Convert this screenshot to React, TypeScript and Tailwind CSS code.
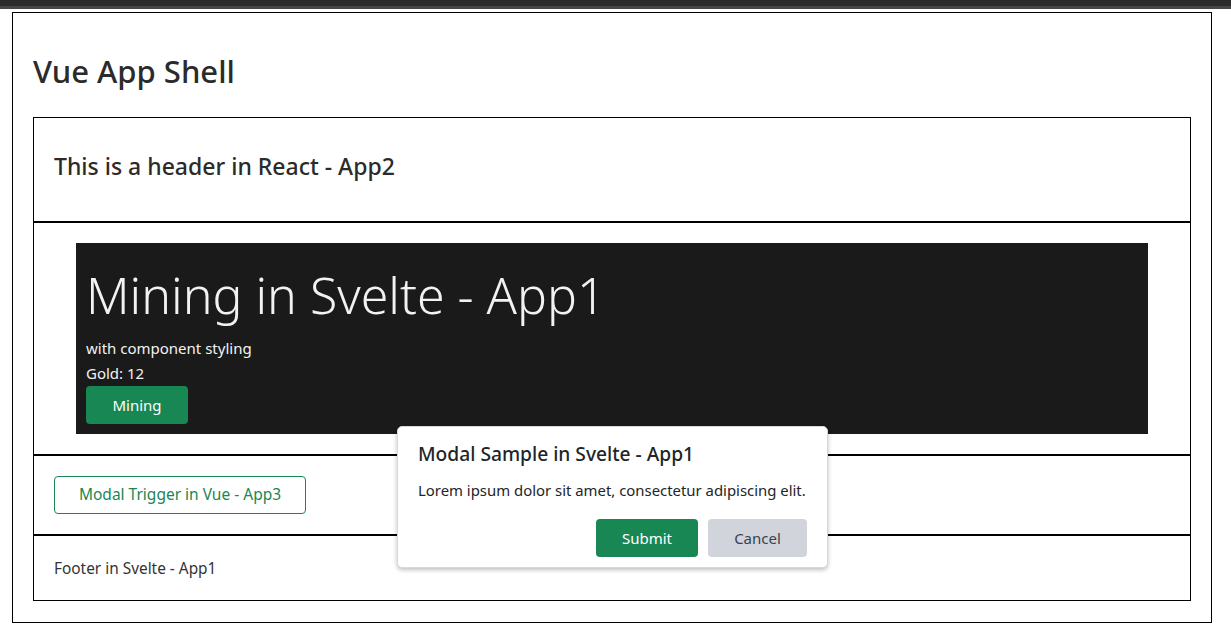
import React from 'react';

const font = { fontFamily: '"Noto Sans", "Open Sans", sans-serif' };

// Svelte modal overlay
const ModalSample: React.FC = () => (
  <div className="absolute left-[397px] top-[426px] w-[431px] h-[142px] bg-white rounded-[5px] border border-[#d8d8d8] shadow-[0_2px_4px_rgba(0,0,0,0.25)] px-5 pt-[13px]">
    <h5 className="text-[19.2px] leading-[28px] font-medium text-[#212529]">Modal Sample in Svelte - App1</h5>
    <p className="mt-[11px] text-[14.9px] leading-[22px] text-[#212529] whitespace-nowrap">
      Lorem ipsum dolor sit amet, consectetur adipiscing elit.
    </p>
    <div className="mt-[18px] flex justify-end gap-[10px]">
      <button className="w-[102px] h-[38px] rounded-[4px] bg-[#198754] text-white text-[15px]">Submit</button>
      <button className="w-[99px] h-[38px] rounded-[4px] bg-[#d1d5db] text-[#374151] text-[15px]">Cancel</button>
    </div>
  </div>
);

export default function App() {
  return (
    <div className="relative w-[1231px] h-[640px] bg-white text-[#212529]" style={font}>
      <div className="h-[6px] bg-[#2b2b2b]" />
      <div className="h-[3px] bg-[#474747]" />
      <div className="ml-[12px] mt-[3px] w-[1200px] h-[611px] border border-black px-5">
        <h2 className="pt-[38px] text-[31px] leading-[40px] font-medium text-[#2b2b2b]">Vue App Shell</h2>
        <div className="mt-[26px] w-[1158px]">
          {/* React header */}
          <div className="h-[105px] border border-black flex items-center px-5">
            <h4 className="text-[23px] font-medium leading-[30px] -mt-[7px] text-[#2b2b2b]">This is a header in React - App2</h4>
          </div>
          {/* Svelte mining */}
          <div className="h-[233px] border border-black px-[42px] pt-5">
            <div className="h-[191px] bg-[#1a1a1a] text-[#f2f2f2] px-[10px]">
              <h1 className="pt-[21px] text-[50px] leading-[62px] font-light">Mining in Svelte - App1</h1>
              <p className="mt-[10px] text-[15px] leading-[24px]">with component styling</p>
              <p className="text-[15px] leading-[26px]">Gold: 12</p>
              <button className="w-[102px] h-[38px] rounded-[4px] bg-[#198754] text-white text-[15px]">Mining</button>
            </div>
          </div>
          {/* Vue trigger */}
          <div className="h-[80px] border border-black flex items-center px-5">
            <button className="w-[252px] h-[38px] rounded-[4px] border border-[#198754] text-[#198754] text-[15.5px]">
              Modal Trigger in Vue - App3
            </button>
          </div>
          {/* Svelte footer */}
          <div className="h-[66px] border border-black flex items-center px-5">
            <span className="text-[15.4px] text-[#333] pt-[1px]">Footer in Svelte - App1</span>
          </div>
        </div>
      </div>
      <ModalSample />
    </div>
  );
}
